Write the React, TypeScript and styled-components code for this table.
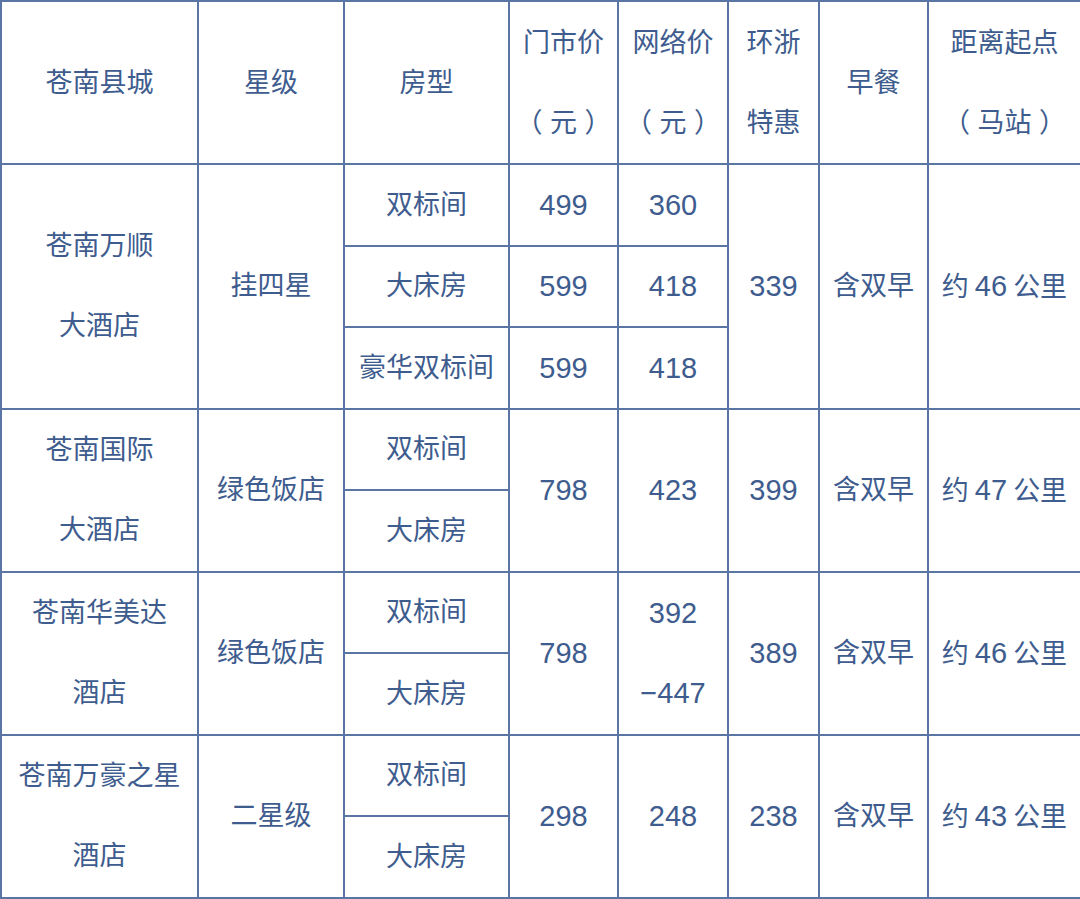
import React from 'react';
import styled, { createGlobalStyle } from 'styled-components';

const GlobalStyle = createGlobalStyle`
  html, body {
    margin: 0;
    padding: 0;
    background: #ffffff;
  }
  body {
    font-family: "Liberation Sans", "Noto Sans CJK SC", sans-serif;
  }
`;

const LINE = '#5a74a3';
const INK = '#3e5c8e';

// сетка таблицы: 8 колонок, 11 подстрок
const Grid = styled.div`
  display: grid;
  grid-template-columns: 197px 146px 165px 109px 110px 91px 109px 153px;
  grid-template-rows: repeat(11, 81.5px);
  width: 1080px;
  box-sizing: border-box;
  border-top: 2px solid ${LINE};
  border-left: 2px solid ${LINE};
`;

const Cell = styled.div<{ $span?: number }>`
  grid-row: span ${(p) => p.$span || 1};
  box-sizing: border-box;
  border-right: 2px solid ${LINE};
  border-bottom: 2px solid ${LINE};
  display: flex;
  flex-direction: column;
  align-items: center;
  justify-content: center;
  color: ${INK};
  font-size: 27px;
  line-height: 80px;
  white-space: nowrap;
  text-align: center;
`;

const Num = styled.span`
  font-size: 29px;
`;

const Gap = styled.span`
  display: inline-block;
  width: 6px;
`;

type Room = { name: string; door?: string; net?: string };

type Hotel = {
  name: string[];
  star: string;
  rooms: Room[];
  door?: string;
  net?: string[];
  deal: string;
  km: string;
};

const hotels: Hotel[] = [
  {
    name: ['苍南万顺', '大酒店'],
    star: '挂四星',
    rooms: [
      { name: '双标间', door: '499', net: '360' },
      { name: '大床房', door: '599', net: '418' },
      { name: '豪华双标间', door: '599', net: '418' },
    ],
    deal: '339',
    km: '46',
  },
  {
    name: ['苍南国际', '大酒店'],
    star: '绿色饭店',
    rooms: [{ name: '双标间' }, { name: '大床房' }],
    door: '798',
    net: ['423'],
    deal: '399',
    km: '47',
  },
  {
    name: ['苍南华美达', '酒店'],
    star: '绿色饭店',
    rooms: [{ name: '双标间' }, { name: '大床房' }],
    door: '798',
    net: ['392', '−447'],
    deal: '389',
    km: '46',
  },
  {
    name: ['苍南万豪之星', '酒店'],
    star: '二星级',
    rooms: [{ name: '双标间' }, { name: '大床房' }],
    door: '298',
    net: ['248'],
    deal: '238',
    km: '43',
  },
];

const headers = [
  ['苍南县城'],
  ['星级'],
  ['房型'],
  ['门市价', '（ 元 ）'],
  ['网络价', '（ 元 ）'],
  ['环浙', '特惠'],
  ['早餐'],
  ['距离起点', '（ 马站 ）'],
];

const Lines: React.FC<{ lines: string[] }> = ({ lines }) => (
  <>
    {lines.map((l) => (
      <span key={l}>{l}</span>
    ))}
  </>
);

const App: React.FC = () => {
  return (
    <>
      <GlobalStyle />
      <Grid>
        {headers.map((h) => (
          <Cell key={h[0]} $span={2}>
            <Lines lines={h} />
          </Cell>
        ))}

        {hotels.map((h) => {
          const n = h.rooms.length;
          const split = !h.door; // у первого отеля цены по каждому номеру
          return h.rooms.map((r, i) => {
            if (i === 0) {
              return (
                <React.Fragment key={h.name[0] + i}>
                  <Cell $span={n}>
                    <Lines lines={h.name} />
                  </Cell>
                  <Cell $span={n}>{h.star}</Cell>
                  <Cell>{r.name}</Cell>
                  {split ? (
                    <>
                      <Cell><Num>{r.door}</Num></Cell>
                      <Cell><Num>{r.net}</Num></Cell>
                    </>
                  ) : (
                    <>
                      <Cell $span={n}><Num>{h.door}</Num></Cell>
                      <Cell $span={n}>
                        {h.net!.map((v) => (
                          <Num key={v}>{v}</Num>
                        ))}
                      </Cell>
                    </>
                  )}
                  <Cell $span={n}><Num>{h.deal}</Num></Cell>
                  <Cell $span={n}>含双早</Cell>
                  <Cell $span={n}>
                    <span>
                      约<Gap /><Num>{h.km}</Num><Gap />公里
                    </span>
                  </Cell>
                </React.Fragment>
              );
            }
            return (
              <React.Fragment key={h.name[0] + i}>
                <Cell>{r.name}</Cell>
                {split && (
                  <>
                    <Cell><Num>{r.door}</Num></Cell>
                    <Cell><Num>{r.net}</Num></Cell>
                  </>
                )}
              </React.Fragment>
            );
          });
        })}
      </Grid>
    </>
  );
};

export default App;
